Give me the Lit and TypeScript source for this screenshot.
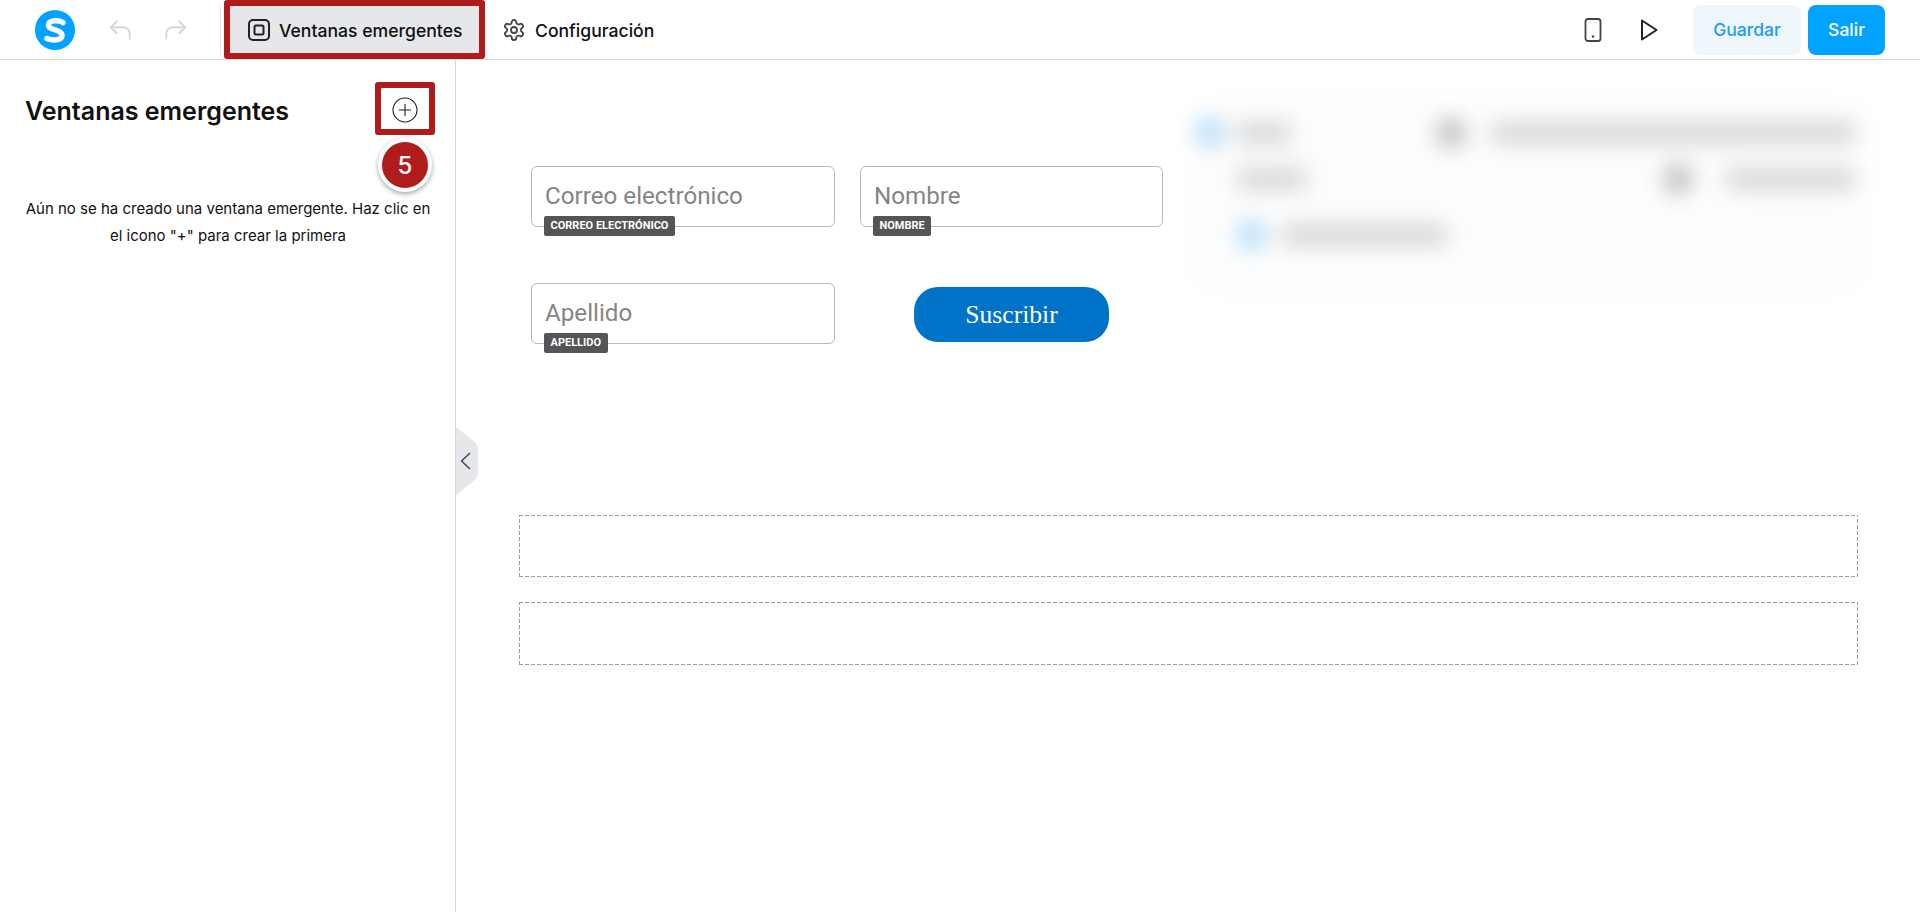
import { LitElement, html, css } from "lit";
import { customElement } from "lit/decorators.js";

@customElement("app-root")
export class AppRoot extends LitElement {
  static styles = css`
    :host { display: block; width: 1920px; height: 912px; overflow: hidden; background: #fff; font-family: Inter, "Liberation Sans", sans-serif; color: #111; }
    * { box-sizing: border-box; }
    svg { display: block; flex: none; }
    .top { height: 60px; border-bottom: 1px solid #d8d8d8; display: flex; align-items: center; padding: 0 35px 0 35px; }
    .hist { display: flex; gap: 30px; margin-left: 32px; color: #d6d6d6; }
    .div { width: 1px; height: 50px; background: #e5e7eb; margin-left: 31px; }
    .tab { display: flex; align-items: center; height: 59px; font-size: 17.6px; font-weight: 500; gap: 9px; padding-top: 1px; }
    .tab.on { margin-left: 3px; width: 261px; background: #e5e7eb; border: 6px solid #b01c1c; border-radius: 3px; padding-left: 18px; }
    .tab.cfg { margin-left: 17px; }
    .right { margin-left: auto; display: flex; align-items: center; }
    .right .play { margin-left: 38px; }
    .btn { height: 50px; border-radius: 8px; font-size: 17.5px; font-weight: 500; display: flex; align-items: center; justify-content: center; }
    .save { width: 108px; background: #eff6fc; color: #1a9bff; margin-left: 35px; }
    .exit { width: 77px; background: #00a3ff; color: #fff; margin-left: 7px; }
    .body { display: flex; height: 852px; position: relative; }
    .side { width: 456px; border-right: 1px solid #d8d8d8; padding: 22px 20px 0 25px; flex: none; }
    .head { display: flex; justify-content: space-between; align-items: flex-start; }
    h1 { margin: 0; font-size: 25px; font-weight: 600; line-height: 32px; padding-top: 13px; }
    .add { width: 60px; height: 53px; border: 6px solid #b01c1c; border-radius: 3px; display: flex; align-items: center; justify-content: center; color: #222; padding-top: 2px; }
    .num { width: 54px; height: 54px; border-radius: 50%; background: #b01c1c; border: 4px solid #fff; box-shadow: 0 2px 5px rgba(0,0,0,.35); color: #fff; font-size: 24px; font-weight: 500; display: flex; align-items: center; justify-content: center; margin: 3px 3px 0 auto; }
    .empty { margin: 3px 0 0; font-size: 15px; line-height: 27px; text-align: center; width: 406px; color: #111; }
    .handle { position: absolute; left: 456px; top: 367px; }
    main { flex: 1; padding: 40px 62px 0 63px; min-width: 0; }
    .row { display: flex; align-items: flex-start; }
    .form { margin: 66px 0 0 12px; display: grid; grid-template-columns: 304px 303px; column-gap: 25px; row-gap: 56px; flex: none; }
    .field { height: 61px; border: 1px solid #b0bacd; border-radius: 6px; padding: 13px 13px; font-family: Roboto, sans-serif; font-size: 24.2px; line-height: 32px; color: #858585; position: relative; }
    .tag { position: absolute; left: 12px; top: 49px; height: 20px; padding: 0 6.5px; background: #555; color: #fff; border-radius: 2px; font-family: Roboto, sans-serif; font-weight: 700; font-size: 11px; line-height: 20px; white-space: nowrap; }
    .sub { justify-self: center; margin-top: 4px; width: 195px; height: 55px; background: #0073c9; color: #fff; border-radius: 24px; font-family: "Liberation Serif", serif; font-size: 25.6px; display: flex; align-items: center; justify-content: center; }
    .panel { margin-left: 30px; width: 668px; height: 190px; background: #fdfdfd; filter: blur(11px); padding: 20px 5px 0 0; flex: none; }
    .pr { display: flex; align-items: center; justify-content: space-between; height: 26px; margin-bottom: 20px; }
    .pg { display: flex; align-items: center; }
    .dot { width: 30px; height: 30px; border-radius: 50%; background: #bdbdbd; margin-right: 25px; }
    .dot.blue { background: #b4dcfa; }
    .bar { height: 22px; background: #d6d6d6; }
    .bar.w1 { width: 54px; }
    .bar.w2 { width: 365px; }
    .bar.w3 { width: 70px; margin-left: 44px; }
    .bar.w4 { width: 130px; }
    .bar.w5 { width: 165px; }
    .dot.d1 { margin-left: 2px; margin-right: 12px; }
    .dot.d2 { margin-right: 33px; }
    .dot.d3 { margin-right: 15px; }
    .pc { margin: 28px 0 0 44px; display: flex; align-items: center; }
    .slot { height: 63px; margin-top: 25px;
      background:
        repeating-linear-gradient(90deg, #9d9d9d 0 4px, transparent 4px 6px) top / 100% 1px no-repeat,
        repeating-linear-gradient(90deg, #9d9d9d 0 4px, transparent 4px 6px) bottom / 100% 1px no-repeat,
        repeating-linear-gradient(0deg, #9d9d9d 0 4px, transparent 4px 6px) left / 1px 100% no-repeat,
        repeating-linear-gradient(0deg, #9d9d9d 0 4px, transparent 4px 6px) right / 1px 100% no-repeat;
    }
    .slot.first { margin-top: 171px; height: 62px; }
  `;

  render() {
    return html`
      <div class="top">
        <svg width="40" height="40" viewBox="0 0 40 40" fill="none"><circle cx="20" cy="20" r="20" fill="#00a3ff"/><path d="M28 12.500C24 10 14 9.500 13.500 15c-.5 5.500 13.500 4 13.500 10.500 0 5.500-10 5-15 3" stroke="#fff" stroke-width="5.500" stroke-linecap="round"/></svg>
        <div class="hist">
          <svg width="26" height="26" viewBox="0 0 24 24" fill="none" stroke="currentColor" stroke-width="1.7" stroke-linecap="round" stroke-linejoin="round"><path d="M9 4 3.500 9.500 9 15"/><path d="M3.500 9.500H15a6 6 0 0 1 6 6V20"/></svg>
          <svg width="26" height="26" viewBox="0 0 24 24" fill="none" stroke="currentColor" stroke-width="1.7" stroke-linecap="round" stroke-linejoin="round"><path d="m15 4 5.500 5.500L15 15"/><path d="M20.500 9.500H9a6 6 0 0 0-6 6V20"/></svg>
        </div>
        <div class="div"></div>
        <div class="tab on">
          <svg width="22" height="22" viewBox="0 0 22 22" fill="none" stroke="#222" stroke-width="2"><rect x="1" y="1" width="20" height="20" rx="4"/><rect x="6.500" y="6.500" width="9" height="9" rx="1.500"/></svg>
          Ventanas emergentes
        </div>
        <div class="tab cfg">
          <svg width="24" height="24" viewBox="0 0 24 24" fill="none" stroke="#444" stroke-width="1.8" stroke-linecap="round" stroke-linejoin="round"><path d="M12.220 2h-.440a2 2 0 0 0-2 2v.180a2 2 0 0 1-1 1.730l-.430.250a2 2 0 0 1-2 0l-.150-.080a2 2 0 0 0-2.730.730l-.220.380a2 2 0 0 0 .730 2.730l.150.100a2 2 0 0 1 1 1.720v.510a2 2 0 0 1-1 1.740l-.150.090a2 2 0 0 0-.730 2.730l.220.380a2 2 0 0 0 2.730.730l.150-.080a2 2 0 0 1 2 0l.430.250a2 2 0 0 1 1 1.730V20a2 2 0 0 0 2 2h.440a2 2 0 0 0 2-2v-.180a2 2 0 0 1 1-1.730l.430-.250a2 2 0 0 1 2 0l.150.080a2 2 0 0 0 2.730-.730l.220-.390a2 2 0 0 0-.730-2.730l-.150-.080a2 2 0 0 1-1-1.740v-.500a2 2 0 0 1 1-1.740l.150-.090a2 2 0 0 0 .730-2.730l-.220-.380a2 2 0 0 0-2.730-.730l-.150.080a2 2 0 0 1-2 0l-.430-.250a2 2 0 0 1-1-1.730V4a2 2 0 0 0-2-2z"/><circle cx="12" cy="12" r="3"/></svg>
          Configuración
        </div>
        <div class="right">
          <svg width="18" height="24" viewBox="0 0 18 24" fill="none" stroke="#444" stroke-width="1.8"><rect x="1.500" y="1" width="15" height="22" rx="2.500"/><circle cx="9" cy="18.500" r="1.200" fill="#444" stroke="none"/></svg>
          <svg class="play" width="18" height="22" viewBox="0 0 18 22" fill="none" stroke="#222" stroke-width="2" stroke-linejoin="round"><path d="M2 1.500v19L16.500 11z"/></svg>
          <div class="btn save">Guardar</div>
          <div class="btn exit">Salir</div>
        </div>
      </div>
      <div class="body">
        <aside class="side">
          <div class="head">
            <h1>Ventanas emergentes</h1>
            <div class="add">
              <svg width="26" height="26" viewBox="0 0 26 26" fill="none" stroke="#222" stroke-width="1.100"><circle cx="13" cy="13" r="12"/><path d="M13 7v12M7 13h12"/></svg>
            </div>
          </div>
          <div class="num">5</div>
          <p class="empty">Aún no se ha creado una ventana emergente. Haz clic en el icono "+" para crear la primera</p>
        </aside>
        <svg class="handle" width="22" height="68" viewBox="0 0 22 68"><path d="M0 0 17.500 14q4.500 3.500 4.500 9v22q0 5.500-4.500 9L0 68z" fill="#e5e7eb"/><path d="M14 26 5.500 34l8.500 8" fill="none" stroke="#374151" stroke-width="1.400"/></svg>
        <main>
          <div class="row">
            <div class="form">
              <div class="field">Correo electrónico<span class="tag">CORREO ELECTRÓNICO</span></div>
              <div class="field">Nombre<span class="tag">NOMBRE</span></div>
              <div class="field">Apellido<span class="tag">APELLIDO</span></div>
              <div class="sub">Suscribir</div>
            </div>
            <div class="panel" aria-hidden="true">
              <div class="pr">
                <div class="pg"><div class="dot blue d1"></div><div class="bar w1"></div></div>
                <div class="pg"><div class="dot"></div><div class="bar w2"></div></div>
              </div>
              <div class="pr">
                <div class="pg"><div class="bar w3"></div></div>
                <div class="pg"><div class="dot d2"></div><div class="bar w4"></div></div>
              </div>
              <div class="pc"><div class="dot blue d3"></div><div class="bar w5"></div></div>
            </div>
          </div>
          <div class="slot first"></div>
          <div class="slot"></div>
        </main>
      </div>
    `;
  }
}
